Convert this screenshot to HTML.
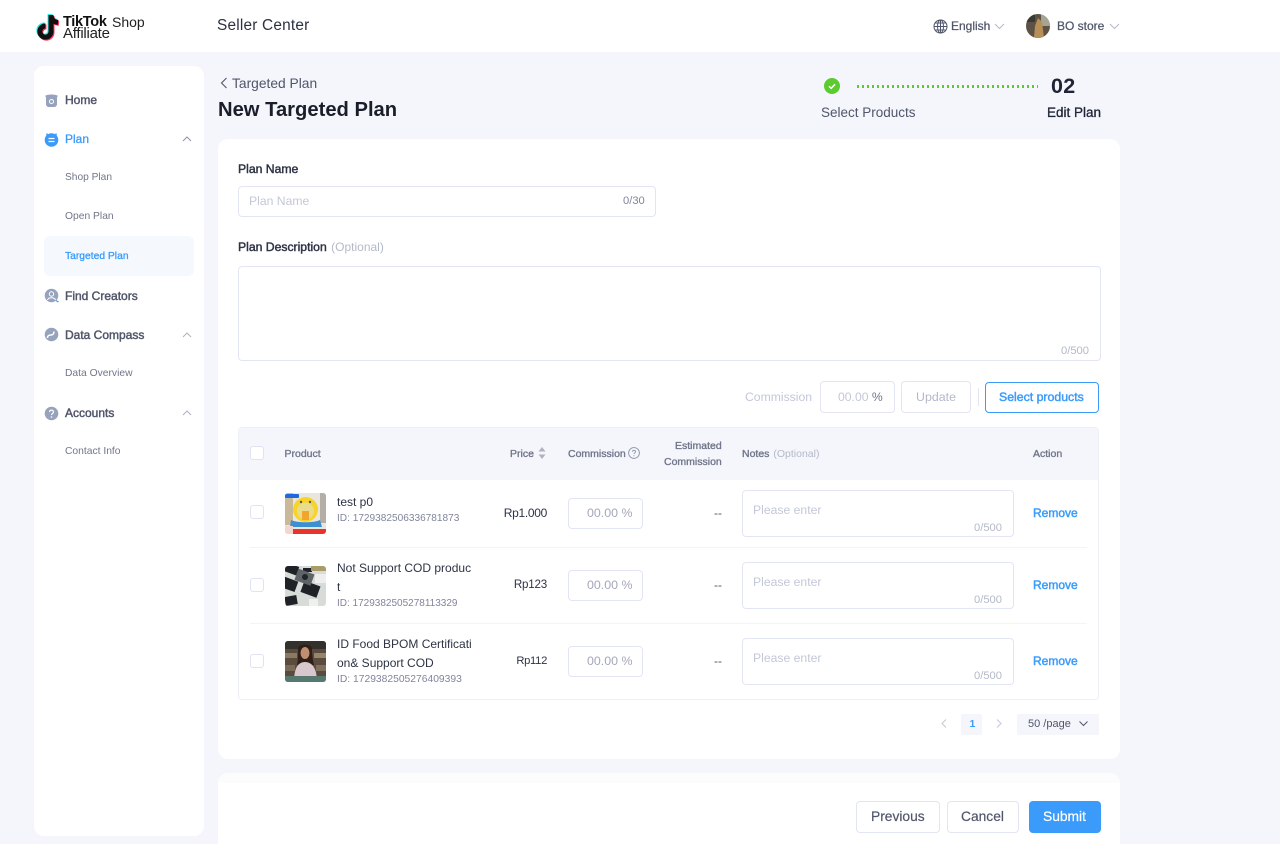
<!DOCTYPE html>
<html><head><meta charset="utf-8"><style>
*{box-sizing:border-box}
html,body{margin:0;padding:0;height:844px;overflow:hidden}
body{width:1280px;height:844px;overflow:hidden;background:#f4f6fb;font-family:"Liberation Sans",sans-serif;position:relative;color:#252b3d}
.a{position:absolute}
.t{position:absolute;white-space:nowrap;line-height:20px;height:20px}
.card{position:absolute;background:#fff;border-radius:10px}
.box{position:absolute;background:#fff;border:1px solid #e2e6f3;border-radius:4px}
.nav{font-size:12px;color:#50566b;-webkit-text-stroke:.45px #50566b}
.sub{font-size:10.3px;color:#70768a}
.th{font-size:10.5px;color:#70768a;-webkit-text-stroke:.35px #70768a}
.name{font-size:12px;color:#2d3345}
.id{font-size:10.1px;color:#80859b}
.ph{font-size:12.2px;color:#c3c8d7}
.cnt{font-size:11.2px;color:#b4b9c9;transform-origin:left}
.rm{font-size:12px;color:#3a9bfa;-webkit-text-stroke:.45px #3a9bfa}
.cb{position:absolute;width:14px;height:14px;border:1px solid #dfe3f2;border-radius:3px;background:#fff}
.pr{font-size:12px;color:#2d3345;right:733px}
.pc{font-size:12.4px;color:#a3a8b9}
.lb{font-size:12.2px;color:#2d3345;-webkit-text-stroke:.45px #2d3345}
.op{font-weight:normal;color:#b4b9c9;-webkit-text-stroke:0}
svg{position:absolute;display:block;overflow:hidden}
</style></head><body>

<div class="a" style="left:0;top:0;width:1280px;height:52px;background:#fff"></div>

<!-- logo -->
<svg style="left:35px;top:12px" width="26" height="29" viewBox="0 0 26 29">
<g fill="none" stroke-width="5">
<path d="M16 3v16.5a5.600 5.600 0 1 1-5.600-5.600M16 4c.5 4 3 6 7 6.400" stroke="#25f4ee" transform="translate(-1,-1)"/>
<path d="M16 3v16.5a5.600 5.600 0 1 1-5.600-5.600M16 4c.5 4 3 6 7 6.400" stroke="#fe2c55" transform="translate(1,1)"/>
<path d="M16 3v16.500a5.600 5.600 0 1 1-5.600-5.600M16 4c.5 4 3 6 7 6.400" stroke="#111"/>
</g></svg>
<div class="t" style="left:63px;top:12px;font-size:14.500px;font-weight:bold;color:#111;letter-spacing:-.3px">TikTok</div>
<div class="t" style="left:112px;top:12px;font-size:14px;color:#222;">Shop</div>
<div class="t" style="left:63px;top:24px;font-size:15px;color:#222;letter-spacing:-.25px">Affiliate</div>
<div class="t" style="left:217px;top:16px;font-size:15.400px;color:#2c3142;letter-spacing:.2px">Seller Center</div>

<!-- header right -->
<svg style="left:933px;top:19px" width="15" height="15" viewBox="0 0 15 15" fill="none" stroke="#50566b" stroke-width="1"><circle cx="7.500" cy="7.500" r="6.500"/><ellipse cx="7.500" cy="7.500" rx="3" ry="6.500"/><path d="M1 7.500h13M2 4h11M2 11h11M7.500 1v13"/></svg>
<div class="t" style="left:951px;top:16px;font-size:12px;color:#50566b;-webkit-text-stroke:.25px #50566b">English</div>
<svg style="left:994px;top:23px" width="11" height="7" viewBox="0 0 11 7" fill="none" stroke="#b4b9c9" stroke-width="1"><path d="M1 1l4.500 4.500L10 1"/></svg>
<svg style="left:1026px;top:14px" width="24" height="24" viewBox="0 0 24 24"><defs><clipPath id="c"><circle cx="12" cy="12" r="12"/></clipPath></defs><g clip-path="url(#c)"><rect width="24" height="24" fill="#5d5245"/><rect x="15" width="9" height="12" fill="#a5a594"/><path d="M8 24l1-12 3-8 4 4 2 16z" fill="#b98f58"/><path d="M0 0h9v8H0z" fill="#3a3a30"/></g></svg>
<div class="t" style="left:1057px;top:16px;font-size:12px;color:#50566b;-webkit-text-stroke:.25px #50566b">BO store</div>
<svg style="left:1109px;top:23px" width="11" height="7" viewBox="0 0 11 7" fill="none" stroke="#b4b9c9" stroke-width="1"><path d="M1 1l4.500 4.500L10 1"/></svg>

<!-- sidebar -->
<div class="card" style="left:34px;top:66px;width:170px;height:770px"></div>
<div class="a" style="left:44px;top:236px;width:150px;height:40px;border-radius:6px;background:#f5f9fe"></div>

<svg style="left:44px;top:93px" width="15" height="14" viewBox="0 0 15 14"><path d="M1 3c2-2 11-2 13 0l-1 1v7c0 2-1.500 3-3 3H5c-1.500 0-3-1-3-3V4z" fill="#97a2bd"/><circle cx="7.500" cy="8.500" r="2" fill="none" stroke="#fff" stroke-width="1"/></svg>
<div class="t nav" style="left:65px;top:89.500px">Home</div>

<svg style="left:44px;top:132px" width="15" height="15" viewBox="0 0 15 15"><circle cx="7.500" cy="8" r="6.800" fill="#3a9bfa"/><path d="M3 1.500v2M12 1.500v2" stroke="#3a9bfa" stroke-width="1.500"/><path d="M4.500 6.500h6M4.500 9.500h6" stroke="#fff" stroke-width="1.300"/></svg>
<div class="t nav" style="left:65px;top:129px;color:#3a9bfa;-webkit-text-stroke:.3px #3a9bfa">Plan</div>
<svg style="left:182px;top:136px" width="10" height="6" viewBox="0 0 10 6" fill="none" stroke="#8e94a8" stroke-width="1"><path d="M1 5l4-4 4 4"/></svg>

<div class="t sub" style="left:65px;top:168px;font-size:10.200px">Shop Plan</div>
<div class="t sub" style="left:65px;top:207px">Open Plan</div>
<div class="t sub" style="left:65px;top:247px;color:#3a9bfa;-webkit-text-stroke:.3px #3a9bfa">Targeted Plan</div>

<svg style="left:44px;top:288px" width="16" height="15" viewBox="0 0 16 15"><circle cx="7.500" cy="7.500" r="6.800" fill="#97a2bd"/><circle cx="7.500" cy="6" r="2.200" fill="none" stroke="#fff"/><path d="M3.500 12c1-3 7-3 8 0" fill="none" stroke="#fff"/><path d="M12 12.500l2.500 1.500" stroke="#3a9bfa" stroke-width="1.200"/></svg>
<div class="t nav" style="left:65px;top:285.500px">Find Creators</div>

<svg style="left:44px;top:327px" width="15" height="15" viewBox="0 0 15 15"><circle cx="7.500" cy="7.500" r="6.800" fill="#97a2bd"/><path d="M3.500 11c0-3 2-3 3.500-3s3-1 3-3.500" fill="none" stroke="#fff" stroke-width="1.500"/></svg>
<div class="t nav" style="left:65px;top:324.500px">Data Compass</div>
<svg style="left:182px;top:332px" width="10" height="6" viewBox="0 0 10 6" fill="none" stroke="#aeb3c2" stroke-width="1"><path d="M1 5l4-4 4 4"/></svg>
<div class="t sub" style="left:65px;top:364px">Data Overview</div>

<svg style="left:44px;top:406px" width="15" height="15" viewBox="0 0 15 15"><circle cx="7.500" cy="7.500" r="6.800" fill="#97a2bd"/><path d="M5.500 6c0-2.500 4-2.500 4 0 0 1.500-2 1.500-2 3" fill="none" stroke="#fff" stroke-width="1.200"/><circle cx="7.500" cy="11" r=".8" fill="#fff"/></svg>
<div class="t nav" style="left:65px;top:402.500px">Accounts</div>
<svg style="left:182px;top:410px" width="10" height="6" viewBox="0 0 10 6" fill="none" stroke="#aeb3c2" stroke-width="1"><path d="M1 5l4-4 4 4"/></svg>
<div class="t sub" style="left:65px;top:442px">Contact Info</div>

<!-- page head -->
<svg style="left:220px;top:77px" width="8" height="12" viewBox="0 0 8 12" fill="none" stroke="#50566b" stroke-width="1.100"><path d="M6.500 1L1.500 6l5 5"/></svg>
<div class="t" style="left:232px;top:74px;font-size:13.800px;color:#50566b">Targeted Plan</div>
<div class="t" style="left:218px;top:99px;font-size:20.200px;font-weight:bold;color:#1a1e2b;height:22px;line-height:22px">New Targeted Plan</div>

<!-- steps -->
<svg style="left:824px;top:78px" width="16" height="16" viewBox="0 0 16 16"><circle cx="8" cy="8" r="8" fill="#5ccb2e"/><path d="M5 8.300l2.200 2L11 6.300" fill="none" stroke="#fff" stroke-width="1.500"/></svg>
<div class="a" style="left:857px;top:85px;width:181px;height:3px;background:repeating-linear-gradient(90deg,#5ccb2e 0 2px,transparent 2px 5px)"></div>
<div class="t" style="left:1051px;top:75px;font-size:21.500px;font-weight:bold;color:#1f2436;height:22px;line-height:22px;letter-spacing:.3px">02</div>
<div class="t" style="left:821px;top:103px;font-size:13.500px;color:#50566b">Select Products</div>
<div class="t" style="left:1047px;top:103px;font-size:13.500px;color:#1f2436;-webkit-text-stroke:.3px #1f2436">Edit Plan</div>

<!-- main card -->
<div class="card" style="left:218px;top:139px;width:902px;height:620px"></div>
<div class="t lb" style="left:238px;top:159px">Plan Name</div>
<div class="box" style="left:238px;top:186px;width:418px;height:31px"></div>
<div class="t ph" style="left:249px;top:191px">Plan Name</div>
<div class="t cnt" style="left:623px;top:191px;color:#80859b">0/30</div>
<div class="t lb" style="left:238px;top:237px">Plan Description <span class="op" style="font-size:12px;margin-left:1px">(Optional)</span></div>
<div class="box" style="left:238px;top:266px;width:863px;height:95px"></div>
<div class="t cnt" style="left:1061px;top:341px">0/500</div>

<div class="t ph" style="left:745px;top:387px">Commission</div>
<div class="box" style="left:820px;top:381px;width:75px;height:32px"></div>
<div class="t ph" style="left:838px;top:387px">00.00 <span style="color:#70768a">%</span></div>
<div class="box" style="left:901px;top:381px;width:70px;height:32px"></div>
<div class="t" style="left:916px;top:387px;font-size:12.400px;color:#b4b9c9">Update</div>
<div class="a" style="left:978px;top:388px;width:1px;height:18px;background:#e2e6f3"></div>
<div class="box" style="left:985px;top:382px;width:114px;height:31px;border-color:#3a9bfa"></div>
<div class="t" style="left:999px;top:387px;font-size:12.300px;color:#3a9bfa;-webkit-text-stroke:.45px #3a9bfa">Select products</div>

<!-- table -->
<div class="a" style="left:238px;top:427px;width:861px;height:273px;border:1px solid #edf0f7;border-radius:4px"></div>
<div class="a" style="left:239px;top:428px;width:859px;height:52px;background:#f4f6fb;border-radius:4px 4px 0 0"></div>
<div class="cb" style="left:250px;top:446px"></div>
<div class="t th" style="left:284.500px;top:443.500px">Product</div>
<div class="t th" style="left:510px;top:443.500px">Price</div>
<svg style="left:538px;top:447px" width="8" height="12" viewBox="0 0 8 12" fill="#aeb3c2"><path d="M4 0l3.500 4.500h-7zM4 12L.5 7.500h7z"/></svg>
<div class="t th" style="left:568px;top:443.500px">Commission</div>
<svg style="left:628px;top:447px" width="12" height="12" viewBox="0 0 12 12" fill="none" stroke="#8e94a8" stroke-width=".9"><circle cx="6" cy="6" r="5.400"/><path d="M4.500 4.800c0-2 3-2 3 0 0 1.100-1.500 1.100-1.500 2.200M6 8.300v1"/></svg>
<div class="t th" style="left:675px;top:435.500px">Estimated</div>
<div class="t th" style="left:664px;top:451.500px">Commission</div>
<div class="t th" style="left:742px;top:443.500px">Notes <span class="op" style="margin-left:1px">(Optional)</span></div>
<div class="t th" style="left:1033px;top:443.500px">Action</div>

<!-- row 1 -->
<div class="cb" style="left:250px;top:505px"></div>
<svg style="left:285px;top:493px;border-radius:3px" width="41" height="41" viewBox="0 0 41 41"><rect width="41" height="41" fill="#e9e6de"/><rect x="0" width="8" height="32" fill="#c9b999"/><rect x="35" width="6" height="30" fill="#b3aea6"/><circle cx="20.500" cy="16.500" r="12.500" fill="#f7d42c"/><circle cx="20.500" cy="18" r="8.500" fill="#e9dd8c"/><path d="M6 27c6 3 23 3 29 0l2 7H5z" fill="#3c8fd0"/><path d="M17 18h7v9h-7z" fill="#f2a52c"/><circle cx="16" cy="9" r="1.200" fill="#555"/><circle cx="25" cy="9" r="1.200" fill="#555"/><rect x="0" y="1" width="14" height="4" rx="1" fill="#1d6ae0"/><rect x="8" y="36" width="33" height="5" fill="#e8342c"/><rect x="0" y="33" width="8" height="8" fill="#f3d6cd"/></svg>
<div class="t name" style="left:337px;top:492px">test p0</div>
<div class="t id" style="left:337px;top:509px">ID: 1729382506336781873</div>
<div class="t pr" style="top:503px;letter-spacing:-.3px">Rp1.000</div>
<div class="box" style="left:568px;top:498px;width:75px;height:31px"></div>
<div class="t pc" style="left:587px;top:503px">00.00 %</div>
<div class="t" style="left:714px;top:503px;font-size:12px;color:#50566b">--</div>
<div class="box" style="left:742px;top:490px;width:272px;height:47px"></div>
<div class="t ph" style="left:753px;top:500px">Please enter</div>
<div class="t cnt" style="left:974px;top:518px">0/500</div>
<div class="t rm" style="left:1033px;top:503px">Remove</div>
<div class="a" style="left:250px;top:547px;width:837px;height:1px;background:#f2f4f9"></div>

<!-- row 2 -->
<div class="cb" style="left:250px;top:578px"></div>
<svg style="left:285px;top:566px;border-radius:3px" width="41" height="40" viewBox="0 0 41 40"><rect width="41" height="40" fill="#d8dcd8"/><g fill="#1f2226"><rect x="-3" y="-2" width="16" height="9" transform="rotate(20 5 3)"/><rect x="-2" y="13" width="14" height="11" transform="rotate(20 5 18)"/><rect x="17" y="17" width="17" height="12" transform="rotate(20 25 23)"/><rect x="0" y="30" width="12" height="9" transform="rotate(-10 6 34)"/><rect x="18" y="2" width="9" height="4"/></g><rect x="11" y="5" width="17" height="12" fill="#5e6468" transform="rotate(20 19 11)"/><rect x="30" y="8" width="11" height="9" fill="#eee"/><rect x="26" y="0" width="15" height="5" fill="#a99c68"/><rect x="24" y="33" width="9" height="7" fill="#f0f0ec"/><circle cx="20" cy="11" r="3" fill="#22262a"/></svg>
<div class="t name" style="left:337px;top:558px">Not Support COD produc</div>
<div class="t name" style="left:337px;top:577px">t</div>
<div class="t id" style="left:337px;top:594px;font-size:10px">ID: 1729382505278113329</div>
<div class="t pr" style="top:575px;font-size:11.600px;letter-spacing:-.2px">Rp123</div>
<div class="box" style="left:568px;top:570px;width:75px;height:31px"></div>
<div class="t pc" style="left:587px;top:575px">00.00 %</div>
<div class="t" style="left:714px;top:575px;font-size:12px;color:#50566b">--</div>
<div class="box" style="left:742px;top:562px;width:272px;height:47px"></div>
<div class="t ph" style="left:753px;top:572px">Please enter</div>
<div class="t cnt" style="left:974px;top:590px">0/500</div>
<div class="t rm" style="left:1033px;top:575px">Remove</div>
<div class="a" style="left:250px;top:623px;width:837px;height:1px;background:#f2f4f9"></div>

<!-- row 3 -->
<div class="cb" style="left:250px;top:654px"></div>
<svg style="left:285px;top:641px;border-radius:3px" width="41" height="41" viewBox="0 0 41 41"><rect width="41" height="41" fill="#5b4a3e"/><rect width="41" height="8" fill="#34302c"/><rect x="0" y="12" width="12" height="5" fill="#8a7a64"/><rect x="29" y="12" width="12" height="5" fill="#94856c"/><rect x="0" y="24" width="10" height="6" fill="#7a6a58"/><rect x="31" y="24" width="10" height="6" fill="#7f705c"/><path d="M13 8c0-6 14-6 14 0 0 6 1 12 2 16H12c1-4 1-10 1-16z" fill="#2e1f17"/><path d="M9 41c0-12 3-20 11-20s12 8 12 20z" fill="#d9c7ce"/><ellipse cx="20" cy="12" rx="4.500" ry="6" fill="#c08e70"/><rect y="35" width="41" height="6" fill="#57786f"/></svg>
<div class="t name" style="left:337px;top:634px">ID Food BPOM Certificati</div>
<div class="t name" style="left:337px;top:653px">on&amp; Support COD</div>
<div class="t id" style="left:337px;top:670px;font-size:10.300px">ID: 1729382505276409393</div>
<div class="t pr" style="top:651px;font-size:11.200px;letter-spacing:-.3px">Rp112</div>
<div class="box" style="left:568px;top:646px;width:75px;height:31px"></div>
<div class="t pc" style="left:587px;top:651px">00.00 %</div>
<div class="t" style="left:714px;top:651px;font-size:12px;color:#50566b">--</div>
<div class="box" style="left:742px;top:638px;width:272px;height:47px"></div>
<div class="t ph" style="left:753px;top:648px">Please enter</div>
<div class="t cnt" style="left:974px;top:666px">0/500</div>
<div class="t rm" style="left:1033px;top:651px">Remove</div>

<!-- pagination -->
<svg style="left:941px;top:719px" width="6" height="9" viewBox="0 0 6 9" fill="none" stroke="#c3c8d7"><path d="M5 .5l-4 4 4 4"/></svg>
<div class="a" style="left:961px;top:714px;width:21px;height:21px;background:#f4f6fb;border-radius:2px"></div>
<div class="t" style="left:969.500px;top:714px;font-size:10.500px;font-weight:bold;color:#3a9bfa">1</div>
<svg style="left:996px;top:719px" width="6" height="9" viewBox="0 0 6 9" fill="none" stroke="#c3c8d7"><path d="M1 .5l4 4-4 4"/></svg>
<div class="a" style="left:1017px;top:714px;width:82px;height:21px;background:#f4f6fb;border-radius:2px"></div>
<div class="t" style="left:1028px;top:714px;font-size:11px;color:#50566b">50 /page</div>
<svg style="left:1079px;top:721px" width="9" height="6" viewBox="0 0 9 6" fill="none" stroke="#50566b"><path d="M.5 .5l4 4 4-4"/></svg>

<!-- footer -->
<div class="a" style="left:218px;top:773px;width:902px;height:71px;background:#fff;border-radius:10px 10px 0 0"></div>
<div class="a" style="left:218px;top:773px;width:902px;height:10px;background:#fcfcfd;border-radius:10px 10px 0 0"></div>
<div class="box" style="left:856px;top:801px;width:84px;height:32px"></div>
<div class="t" style="left:871px;top:807px;font-size:13.800px;color:#50566b;-webkit-text-stroke:.2px #50566b">Previous</div>
<div class="box" style="left:947px;top:801px;width:72px;height:32px"></div>
<div class="t" style="left:961px;top:807px;font-size:13.800px;color:#50566b;-webkit-text-stroke:.2px #50566b">Cancel</div>
<div class="a" style="left:1029px;top:801px;width:72px;height:32px;background:#3a9bfa;border-radius:4px"></div>
<div class="t" style="left:1043px;top:807px;font-size:13.800px;color:#fff;-webkit-text-stroke:.2px #fff">Submit</div>
</body></html>
